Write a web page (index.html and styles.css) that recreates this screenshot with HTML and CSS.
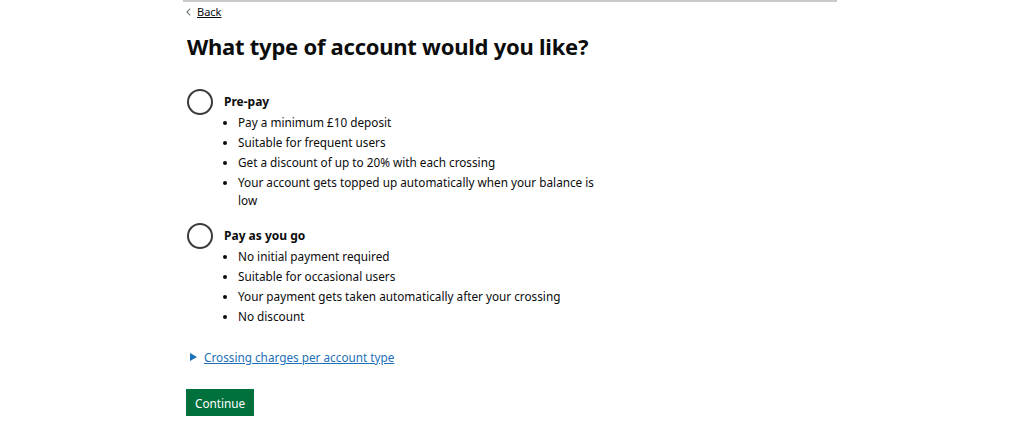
FILE: index.html
```html
<!DOCTYPE html>
<html lang="en">
<head>
<meta charset="utf-8">
<title>What type of account would you like?</title>
<link rel="stylesheet" href="styles.css">
</head>
<body>
<div class="page">
  <div class="topline"></div>
  <a class="back" href="#"><svg class="chev" width="5" height="8" viewBox="0 0 5 8"><path d="M4.2 0.6 L1 4 L4.2 7.4" fill="none" stroke="#6f7777" stroke-width="1.1"/></svg>Back</a>
  <h1 class="title">What type of account would you like?</h1>
  <div class="radios">
    <div class="radio">
      <span class="circle"></span>
      <div class="radio-body">
        <div class="label">Pre-pay</div>
        <ul class="hint">
          <li>Pay a minimum £10 deposit</li>
          <li>Suitable for frequent users</li>
          <li>Get a discount of up to 20% with each crossing</li>
          <li>Your account gets topped up automatically when your balance is low</li>
        </ul>
      </div>
    </div>
    <div class="radio">
      <span class="circle"></span>
      <div class="radio-body">
        <div class="label">Pay as you go</div>
        <ul class="hint">
          <li>No initial payment required</li>
          <li>Suitable for occasional users</li>
          <li>Your payment gets taken automatically after your crossing</li>
          <li>No discount</li>
        </ul>
      </div>
    </div>
  </div>
  <div class="details"><span class="tri"></span><a href="#">Crossing charges per account type</a></div>
  <button class="btn">Continue</button>
</div>
</body>
</html>
```
FILE: styles.css
```css
html, body { margin: 0; padding: 0; background: #fff; }
body { font-family: "Noto Sans", "Liberation Sans", sans-serif; color: #0b0c0c; }
.page { width: 654px; margin-left: 183px; display: flex; flex-direction: column; align-items: flex-start; }
.topline { width: 654px; height: 2px; background: #c9c9c9; }
.back { margin-top: 3px; margin-left: 3px; font-size: 11px; line-height: 14px; color: #0b0c0c; text-decoration: underline; display: flex; align-items: center; }
.chev { margin-right: 6px; flex: none; }
.title { margin: 12px 0 0 4px; font-size: 22px; line-height: 30px; font-weight: 700; letter-spacing: -0.25px; }
.radios { margin-top: 28px; margin-left: 4px; display: flex; flex-direction: column; gap: 12px; }
.radio { display: flex; align-items: flex-start; }
.circle { width: 22px; height: 22px; border: 2px solid #3b3b3b; border-radius: 50%; flex: none; }
.radio-body { margin-left: 11px; width: 380px; }
.label { font-size: 12px; font-weight: 700; line-height: 16px; margin-top: 5px; }
.hint { margin: 3px 0 0 0; padding-left: 14px; font-size: 11.75px; line-height: 18px; }
.hint li { margin-bottom: 2px; }
.details { margin: 22px 0 0 7px; display: flex; align-items: center; font-size: 11.75px; line-height: 16px; }
.tri { width: 0; height: 0; border-left: 7px solid #1d70b8; border-top: 4px solid transparent; border-bottom: 4px solid transparent; margin-right: 7px; }
.details a { color: #1d70b8; text-decoration: underline; }
.btn { margin: 24px 0 0 3px; background: #00703c; color: #fff; border: 0; box-shadow: 0 2px 0 #002d18; font-family: inherit; font-size: 11.75px; line-height: 16px; padding: 6px 9px 5px; }
```
